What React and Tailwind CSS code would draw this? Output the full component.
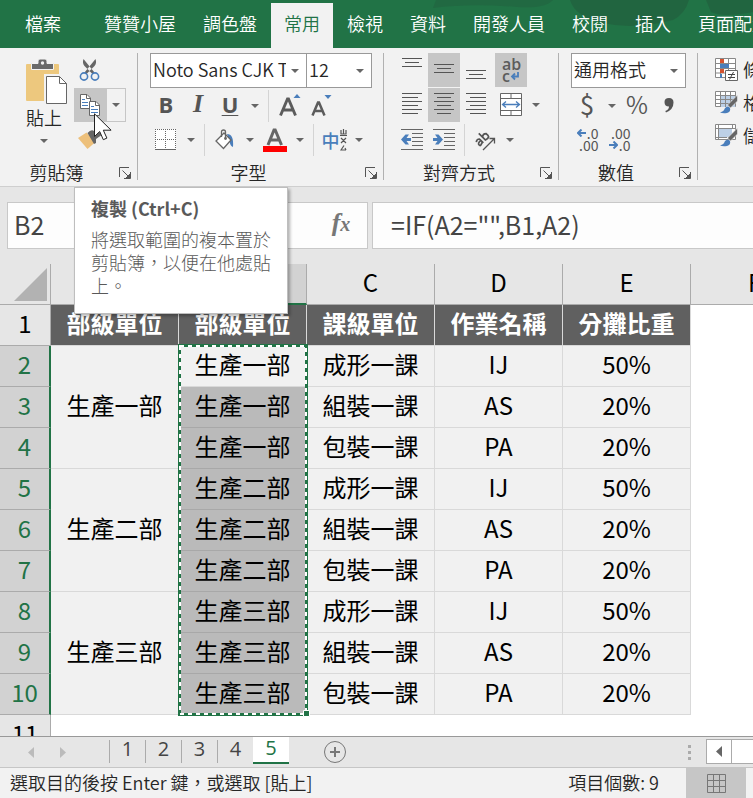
const TABS = [
  ['檔案', 'mr-4'],
  ['贊贊小屋', ''],
  ['調色盤', ''],
  ['常用', 'active'],
  ['檢視', ''],
  ['資料', ''],
  ['開發人員', ''],
  ['校閱', ''],
  ['插入', ''],
  ['頁面配置', ''],
];

const GROUPS = ['生產一部', '生產二部', '生產三部'];
const LESSONS = [
  ['成形一課', 'IJ', '50%'],
  ['組裝一課', 'AS', '20%'],
  ['包裝一課', 'PA', '20%'],
];

function Arrow() {
  return (
    <svg width="8" height="4" viewBox="0 0 8 4" className="shrink-0" aria-hidden="true">
      <path d="M0 0h8L4 4z" fill="#666" />
    </svg>
  );
}

function ArrowButton({ label }) {
  return (
    <button aria-label={label} className="flex h-full w-[18px] shrink-0 items-center justify-center">
      <Arrow />
    </button>
  );
}

function Tool({ label, on, children }) {
  return (
    <button
      aria-label={label}
      className={`flex h-full w-8 shrink-0 items-center justify-center ${on ? 'bg-[#c6c6c6]' : ''}`}
    >
      {children}
    </button>
  );
}

function Divider() {
  return <div className="mx-1 h-8 w-px shrink-0 bg-[#d4d4d4]" />;
}

function Row({ children }) {
  return <div className="flex h-[34px] items-center">{children}</div>;
}

function Group({ title, width, children }) {
  return (
    <section className={`flex shrink-0 ${width}`}>
      <div className="flex min-w-0 flex-1 flex-col">
        <div className="flex h-[104px] flex-col gap-px">{children}</div>
        <div className="mt-[3px] flex h-6 items-center">
          <span className="flex-1 text-center text-[18px] leading-6 text-[#262626]">{title}</span>
          <button aria-label={`${title}設定`} className="flex h-full w-6 items-center justify-center pt-[2px]">
            <svg width="12" height="12" viewBox="0 0 12 12" fill="none" stroke="#555" aria-hidden="true">
              <path d="M.5 10V.5H10M3.500 3.500l6 6M11.500 5v6.500H5" />
              <path d="M11 7v4H7z" fill="#555" />
            </svg>
          </button>
        </div>
      </div>
      <div className="h-[127px] w-px bg-[#b1b1b1]" />
    </section>
  );
}

function Combo({ label, value, width }) {
  return (
    <label className={`relative block h-[35px] border border-[#999] bg-white ${width}`}>
      <select
        aria-label={label}
        className="h-full w-full appearance-none bg-transparent pb-[2px] pl-[2px] pr-5 text-[18px] font-[350] text-[#262626] outline-none"
      >
        <option>{value}</option>
      </select>
      <span className="pointer-events-none absolute inset-y-0 right-[7px] flex items-center">
        <Arrow />
      </span>
    </label>
  );
}

function Lines({ rows }) {
  return (
    <svg width="22" height="34" viewBox="0 0 22 34" stroke="#555" aria-hidden="true">
      {rows.map(([y, x1, x2]) => (
        <path key={y} d={`M${x1} ${y + 0.5}H${x2}`} />
      ))}
    </svg>
  );
}

function PasteIcon() {
  return (
    <svg width="46" height="46" viewBox="0 0 46 46" aria-hidden="true">
      <rect x="5" y="5" width="33" height="37" rx="1" fill="#edc87e" />
      <path d="M10.500 10.500V4.500H17V2q0-2 2-2h5q2 0 2 2v2.500h6.500v6z" fill="#6a6a6a" stroke="#f2f2f2" />
      <circle cx="21.500" cy="4" r="1.700" fill="#f2f2f2" />
      <path d="M24.500 16.500H39l6.500 7v21h-21z" fill="#fff" stroke="#f2f2f2" strokeWidth="3" />
      <path d="M25.500 17.500H38.500l7 7v20h-20z" fill="#fff" stroke="#666" />
      <path d="M38.500 17.500v7h7" fill="none" stroke="#666" />
    </svg>
  );
}

function CutIcon() {
  return (
    <svg width="22" height="22" viewBox="0 0 22 22" aria-hidden="true">
      <path d="M4.500 0q-1.500 4 1 7l8 8 2-1.500zM16.500 0q1.500 4-1 7l-8 8-2-1.500z" fill="#666" />
      <circle cx="5" cy="17.500" r="3.600" fill="none" stroke="#4a7ebb" strokeWidth="1.600" />
      <circle cx="16" cy="17.500" r="3.600" fill="none" stroke="#4a7ebb" strokeWidth="1.600" />
    </svg>
  );
}

function CopyIcon() {
  return (
    <svg width="20" height="22" viewBox="0 0 20 22" aria-hidden="true">
      <path d="M.5.5H7l3.500 3.500v10.500H.5z" fill="#fff" stroke="#666" />
      <path d="M6.500.5v4h4" fill="none" stroke="#666" />
      <path d="M2 5.500h3M2 8.500h6M2 11.500h6" stroke="#4a7ebb" />
      <path d="M9.500 7.500H16l3.500 3.500v10.500h-10z" fill="#fff" stroke="#666" />
      <path d="M15.500 7.500v4h4" fill="none" stroke="#666" />
      <path d="M11 12.500h3M11 15.500h7M11 18.500h7" stroke="#4a7ebb" />
    </svg>
  );
}

function BrushIcon() {
  return (
    <svg width="24" height="20" viewBox="0 0 24 20" aria-hidden="true">
      <path d="M0 8l8.500-5.500 9 9.500-8 7z" fill="#edc07b" />
      <path d="M9.500 3q4-4.500 7-1.500l1.500 2.500 5-2.500v4L18 9v4l-2 1z" fill="#666" />
    </svg>
  );
}

function Pointer() {
  return (
    <svg
      className="pointer-events-none absolute left-[94px] top-[113px] z-20"
      width="19"
      height="28"
      viewBox="0 0 19 28"
      aria-hidden="true"
    >
      <path d="M.5.8v22.700l5.200-5 3.600 8.200 3.600-1.600-3.600-7.900h7.800z" fill="#fff" stroke="#222" />
    </svg>
  );
}

function SizeIcon({ up }) {
  return (
    <svg width="24" height="26" viewBox="0 0 24 26" aria-hidden="true">
      {up ? (
        <path d="M3.500 22.500L10.500 6h1L18.500 22.500M6.500 17h9" fill="none" stroke="#5c5c5c" strokeWidth="2.900" />
      ) : (
        <path d="M3.500 22.500L9 9.500h1L15.500 22.500M6 18h7" fill="none" stroke="#5c5c5c" strokeWidth="2.500" />
      )}
      <path d={up ? 'M16.500 5h7L20 1z' : 'M15.500 2h7L19 6z'} fill="#4a7ebb" />
    </svg>
  );
}

function BordersIcon() {
  return (
    <svg width="22" height="22" viewBox="0 0 22 22" aria-hidden="true">
      <rect width="21" height="21" fill="#fff" />
      <path d="M0 .5h21M0 10.500h21M.5 0v20M10.500 0v20M20.500 0v20" stroke="#666" strokeDasharray="1 1" />
      <path d="M0 20.500h21" stroke="#666" />
    </svg>
  );
}

function BucketIcon() {
  return (
    <svg width="20" height="22" viewBox="0 0 20 22" aria-hidden="true">
      <path d="M12 5q7 0 6 13-3-1-3.500-6z" fill="#4a7ebb" />
      <path d="M9 4l7 7-7.500 8.500L1 12z" fill="#fff" stroke="#666" strokeWidth="1.300" />
      <path d="M6.500 8V3q0-2 2-2t2 2v6" fill="none" stroke="#666" strokeWidth="1.300" />
      <circle cx="10.500" cy="9.500" r="1.400" fill="#666" />
    </svg>
  );
}

function FontColorIcon() {
  return (
    <svg width="24" height="24" viewBox="0 0 24 24" aria-hidden="true">
      <path d="M5 17L11 2h1.200L18.500 17M7.500 12h8.500" fill="none" stroke="#666" strokeWidth="3" />
      <path d="M0 18h24v6H0z" fill="#f00" />
    </svg>
  );
}

function PhoneticIcon() {
  return (
    <span className="flex items-center">
      <span className="text-[18px] font-medium leading-6 text-[#4a7ebb]">中</span>
      <svg width="7" height="22" viewBox="0 0 7 22" fill="none" stroke="#555" strokeWidth="1.200" aria-hidden="true">
        <path d="M1 1v4h5V1M3.500 0v5M0 6.500h7M1 9l5 5M6 9l-5 5M4 16.500l-3 4.500h5M5 19l1 2" />
      </svg>
    </span>
  );
}

function WrapIcon() {
  return (
    <span className='flex h-full w-[18px] flex-col items-start font-["Open_Sans",sans-serif] text-[16px] font-semibold leading-[12px] text-[#5c5c5c]'>
      <span className="pt-[5px]">ab</span>
      <span className="flex items-center">
        c
        <svg width="9" height="10" viewBox="0 0 9 10" fill="none" stroke="#4a7ebb" strokeWidth="1.800" aria-hidden="true">
          <path d="M8 1v4.500H2M5 2.500l-3 3 3 3" />
        </svg>
      </span>
    </span>
  );
}

function MergeIcon() {
  return (
    <svg width="24" height="24" viewBox="0 0 24 24" aria-hidden="true">
      <path d="M1.500.5h21v22h-21zM1.500 5.500h21M1.500 17.500h21M12 1v4M12 18v4" fill="#fff" stroke="#666" />
      <path d="M4 11.500h16M7 8.500l-3.500 3 3.500 3M17 8.500l3.500 3-3.500 3" fill="none" stroke="#4a7ebb" strokeWidth="1.300" />
    </svg>
  );
}

function IndentIcon({ right }) {
  return (
    <svg width="22" height="22" viewBox="0 0 22 22" aria-hidden="true">
      <path d="M0 .5h22M11 4.500h11M11 8.500h11M11 12.500h11M11 16.500h11M0 20.500h22" stroke="#666" />
      <path
        d={right ? 'M0 9h4.500L2 5.500h3.500l4.500 5-4.500 5H2L4.500 12H0z' : 'M10 9H5.500L8 5.500H4.500L0 10.500l4.500 5H8L5.500 12H10z'}
        fill="#4a7ebb"
      />
    </svg>
  );
}

function OrientIcon() {
  return (
    <svg width="22" height="22" viewBox="0 0 22 22" fill="none" stroke="#555" aria-hidden="true">
      <g transform="rotate(-45 9 10)" strokeWidth="1.700">
        <path d="M2 7.500q2.500-2 4.500 0V13M6.500 9.500Q2 9 2 11.500t4.500 0" />
        <path d="M10 3v10M10 8.500q2.500-2.500 5 0 .5 2.500-.5 4-2 1-4.500 0" />
      </g>
      <path d="M9 21L20 10M15.500 9.500h5v5" strokeWidth="1.300" />
    </svg>
  );
}

function BlueArrow({ right }) {
  return (
    <svg width="9" height="8" viewBox="0 0 9 8" fill="none" stroke="#4a7ebb" strokeWidth="2" aria-hidden="true">
      <path d={right ? 'M0 4h8M4.500.5L8 4 4.500 7.500' : 'M9 4H1M4.500.5L1 4l3.500 3.500'} />
    </svg>
  );
}

function DecimalIcon({ fewer }) {
  return (
    <span className="flex w-[23px] flex-col pb-[2px] text-right text-[14px] font-normal leading-3 text-[#555]">
      <span className="flex items-center justify-end gap-px">
        {!fewer && <BlueArrow />}
        {fewer ? '.00' : '.0'}
      </span>
      <span className="flex items-center justify-end gap-px">
        {fewer && <BlueArrow right />}
        {fewer ? '.0' : '.00'}
      </span>
    </span>
  );
}

function ConditionalIcon() {
  return (
    <svg width="23" height="23" viewBox="0 0 23 23" aria-hidden="true">
      <path d="M.5.500h20v19H.5zM5.500 0v20M.5 5.500h20M.5 10.500h20M.5 15h20M13.500 0v20" fill="#fff" stroke="#888" />
      <path d="M5 1h4v4H5zM5 11h4v4H5z" fill="#d35230" />
      <path d="M5 6h9v4H5zM5 16h2v4H5z" fill="#4a7ebb" />
      <path d="M10.500 12.500h12v10h-12z" fill="#fff" stroke="#666" />
      <path d="M13 16.500h7M13 19.500h7M18.500 14l-4 7.500" stroke="#444" />
    </svg>
  );
}

function TableBrushIcon({ cell }) {
  return (
    <svg width="23" height="23" viewBox="0 0 23 23" aria-hidden="true">
      <path d="M.5.500h20v15H.5z" fill="#fff" stroke="#888" />
      <path d={cell ? 'M4 4h13v9H4z' : 'M5 5h15v11H5z'} fill="#bdd0e6" />
      <path
        d={cell ? 'M.5 4.500h20M3.500 0v16M17.500 0v5M0 13.500h12' : 'M5.500 0v16M10.500 0v16M15.500 0v12M.5 4.500h20M.5 8.500h20M.5 12.500h14'}
        stroke="#888"
        fill="none"
      />
      <path d="M22.500 4v6l-7 7-3-3z" fill="#666" stroke="#f2f2f2" strokeWidth=".6" />
      <path d="M5 21.500q4-1 5-4.500 3-2.500 5 0 1 4-3 5-4 .8-7-.5z" fill="#4a7ebb" />
    </svg>
  );
}

function Ribbon() {
  return (
    <div className="flex h-[139px] shrink-0 overflow-hidden border-b border-[#cfcfcf] bg-[#f2f2f2] pt-[5px] font-[350]">
      <Group title="剪貼簿" width="w-[138px]">
        <div className="flex pl-4">
          <button className="flex w-[56px] flex-col items-center pt-[6px]">
            <PasteIcon />
            <span className="mb-[10px] text-[18px] leading-6 text-[#262626]">貼上</span>
            <Arrow />
          </button>
          <div className="ml-[2px] flex flex-col gap-px">
            <Row>
              <Tool label="剪下"><CutIcon /></Tool>
            </Row>
            <Row>
              <Tool label="複製" on><CopyIcon /></Tool>
              <div className="h-full border border-[#c6c6c6]"><ArrowButton label="複製選項" /></div>
            </Row>
            <Row>
              <Tool label="複製格式"><BrushIcon /></Tool>
            </Row>
          </div>
        </div>
      </Group>

      <Group title="字型" width="w-[246px]">
        <div className="flex h-[35px] pl-3">
          <Combo label="字型" value="Noto Sans CJK TC Regular" width="w-[157px]" />
          <Combo label="字型大小" value="12" width="-ml-px w-[66px]" />
        </div>
        <div className="pl-3">
          <Row>
            <Tool label="粗體"><b className='mb-1 font-["Open_Sans",sans-serif] text-[22px] leading-6 text-[#555]'>B</b></Tool>
            <Tool label="斜體"><b className='mb-1 font-["Liberation_Serif",serif] text-[26px] italic leading-6 text-[#555]'>I</b></Tool>
            <Tool label="底線">
              <span className='mb-1 font-["Open_Sans",sans-serif] text-[22px] font-bold leading-6 text-[#555] underline decoration-1 underline-offset-2'>U</span>
            </Tool>
            <ArrowButton label="底線選項" />
            <Divider />
            <Tool label="放大字型"><SizeIcon up /></Tool>
            <Tool label="縮小字型"><SizeIcon /></Tool>
          </Row>
          <Row>
            <Tool label="框線"><BordersIcon /></Tool>
            <ArrowButton label="框線選項" />
            <Divider />
            <Tool label="填滿色彩"><BucketIcon /></Tool>
            <ArrowButton label="填滿色彩選項" />
            <Tool label="字型色彩"><FontColorIcon /></Tool>
            <ArrowButton label="字型色彩選項" />
            <Divider />
            <Tool label="注音標示"><PhoneticIcon /></Tool>
            <ArrowButton label="注音標示選項" />
          </Row>
        </div>
      </Group>

      <Group title="對齊方式" width="w-[175px]">
        <div className="flex flex-col gap-px pl-3">
          <Row>
            <Tool label="靠上對齊"><Lines rows={[[5, 1, 21], [9, 4, 18], [13, 1, 21]]} /></Tool>
            <Tool label="置中對齊" on><Lines rows={[[11, 1, 21], [15, 4, 18], [19, 1, 21]]} /></Tool>
            <Tool label="靠下對齊"><Lines rows={[[17, 1, 21], [21, 4, 18], [25, 1, 21]]} /></Tool>
            <div className="ml-[3px] h-full"><Tool label="自動換行" on><WrapIcon /></Tool></div>
          </Row>
          <Row>
            <Tool label="靠左對齊"><Lines rows={[[5, 1, 21], [9, 1, 17], [13, 1, 21], [17, 1, 17], [21, 1, 21], [25, 1, 17]]} /></Tool>
            <Tool label="置中" on><Lines rows={[[5, 1, 21], [9, 4, 18], [13, 1, 21], [17, 4, 18], [21, 1, 21], [25, 4, 18]]} /></Tool>
            <Tool label="靠右對齊"><Lines rows={[[5, 1, 21], [9, 5, 21], [13, 1, 21], [17, 5, 21], [21, 1, 21], [25, 5, 21]]} /></Tool>
            <div className="ml-[3px] flex h-full">
              <Tool label="跨欄置中"><MergeIcon /></Tool>
              <ArrowButton label="跨欄置中選項" />
            </div>
          </Row>
          <Row>
            <Tool label="減少縮排"><IndentIcon /></Tool>
            <Tool label="增加縮排"><IndentIcon right /></Tool>
            <Divider />
            <Tool label="方向"><OrientIcon /></Tool>
            <ArrowButton label="方向選項" />
          </Row>
        </div>
      </Group>

      <Group title="數值" width="w-[139px]">
        <div className="flex h-[35px] pl-3">
          <Combo label="數值格式" value="通用格式" width="w-[115px]" />
        </div>
        <div className="pl-3">
          <Row>
            <Tool label="會計數字格式"><span className="mb-1 text-[26px] font-normal leading-8 text-[#555]">$</span></Tool>
            <ArrowButton label="會計選項" />
            <Tool label="百分比"><span className="mb-1 text-[24px] leading-8 text-[#555]">%</span></Tool>
            <Tool label="千分位">
              <svg width="10" height="16" viewBox="0 0 10 16" aria-hidden="true">
                <path d="M.5 4q0-4 4.500-4t4.500 4.500q0 7-7.500 10l-.7-1.500Q5 11.500 5 8.500.5 8.500.5 4z" fill="#555" />
              </svg>
            </Tool>
          </Row>
          <Row>
            <Tool label="增加小數位數"><DecimalIcon /></Tool>
            <Tool label="減少小數位數"><DecimalIcon fewer /></Tool>
          </Row>
        </div>
      </Group>

      <div className="flex flex-col gap-px whitespace-nowrap pl-[17px] text-[18px] text-[#262626]">
        <button className="flex h-8 items-center gap-[5px]"><ConditionalIcon />條件式格式設定</button>
        <button className="flex h-8 items-center gap-[5px]"><TableBrushIcon />格式化為表格</button>
        <button className="flex h-8 items-center gap-[5px]"><TableBrushIcon cell />儲存格樣式</button>
      </div>
    </div>
  );
}

function CopyTooltip() {
  return (
    <div
      role="tooltip"
      className="absolute left-[74px] top-[187px] z-10 h-[127px] w-[214px] border border-[#bebebe] bg-white px-4 py-2 text-[#595959] shadow-[2px_2px_3px_rgba(0,0,0,0.3)]"
    >
      <p className="mb-2 text-[18px] font-bold leading-6">複製 (Ctrl+C)</p>
      <p className="w-[180px] text-[18px] font-light leading-[23px]">將選取範圍的複本置於剪貼簿，以便在他處貼上。</p>
    </div>
  );
}

function FormulaBar() {
  return (
    <div className="flex h-[77px] shrink-0 bg-[#e6e6e6] pl-[7px] pt-[15px]">
      <input
        aria-label="名稱方塊"
        defaultValue="B2"
        className="h-[47px] w-[150px] shrink-0 border border-[#c8c8c8] bg-[#fdfdfd] px-[6px] pb-1 text-[25px] text-[#444] outline-none"
      />
      <div className="ml-[5px] flex h-[47px] w-[206px] shrink-0 items-center justify-end border border-[#c8c8c8] bg-[#fdfdfd]">
        <button aria-label="輸入" className="flex w-8 justify-center">
          <svg width="20" height="16" viewBox="0 0 20 16" fill="none" stroke="#b8b8b8" strokeWidth="3" aria-hidden="true">
            <path d="M2 8l6 6L18 1" />
          </svg>
        </button>
        <button aria-label="插入函數" className='ml-5 w-[52px] pb-1 text-center font-["Liberation_Serif",serif] text-[26px] font-bold italic leading-8 text-[#777]'>
          f<span className="text-[20px]">x</span>
        </button>
      </div>
      <input
        aria-label="資料編輯列"
        defaultValue={'=IF(A2="",B1,A2)'}
        className="ml-1 h-[47px] min-w-0 flex-1 border border-r-0 border-[#c8c8c8] bg-[#fdfdfd] px-[18px] pb-1 text-[25px] text-[#444] outline-none"
      />
    </div>
  );
}

const HEAD = 'border-r border-b border-[#ababab] bg-[#e6e6e6] p-0 pb-1 text-center font-normal text-black';
const CELL = 'border-r border-b border-[#d9d9d9] bg-[#f1f1f1] p-0 pb-1 text-center';
const TITLE = 'border-r border-b border-[#d9d9d9] bg-[#606060] p-0 pb-1 text-center font-bold text-white';

function RowHead({ n, selected }) {
  return (
    <th
      scope="row"
      className={
        selected
          ? 'border-r-2 border-b border-r-[#217346] border-b-[#ababab] bg-[#d2d2d2] p-0 pb-1 text-center font-normal text-[#217346]'
          : HEAD
      }
    >
      {n}
    </th>
  );
}

function Sheet() {
  return (
    <main className="relative min-h-0 flex-1 overflow-hidden bg-white">
      <table className="w-[819px] table-fixed border-separate border-spacing-0 text-[24px] leading-[36px] text-black">
        <colgroup>
          <col className="w-[51px]" />
          <col className="w-[128px]" />
          <col className="w-[128px]" />
          <col className="w-[128px]" />
          <col className="w-[128px]" />
          <col className="w-[128px]" />
          <col className="w-[128px]" />
        </colgroup>
        <thead>
          <tr className="h-[41px]">
            <th className="border-b border-r border-[#ababab] bg-[#e6e6e6] p-0" aria-label="全選">
              <svg className="ml-[14px]" width="34" height="33" viewBox="0 0 34 33" aria-hidden="true">
                <path d="M33 0v33H0z" fill="#b2b2b2" />
              </svg>
            </th>
            <th className={HEAD}>A</th>
            <th className="border-b-2 border-r border-b-[#217346] border-r-[#ababab] bg-[#d2d2d2] p-0 pb-[3px] font-normal text-[#217346]">B</th>
            <th className={HEAD}>C</th>
            <th className={HEAD}>D</th>
            <th className={HEAD}>E</th>
            <th className={HEAD}>F</th>
          </tr>
        </thead>
        <tbody>
          <tr className="h-[41px]">
            <RowHead n={1} />
            <td className={TITLE}>部級單位</td>
            <td className={TITLE}>部級單位</td>
            <td className={TITLE}>課級單位</td>
            <td className={TITLE}>作業名稱</td>
            <td className={TITLE}>分攤比重</td>
            <td />
          </tr>
          {GROUPS.map((dept, g) =>
            LESSONS.map(([lesson, job, share], i) => (
              <tr key={dept + lesson} className="h-[41px]">
                <RowHead n={g * 3 + i + 2} selected />
                {i === 0 && <td rowSpan={3} className={CELL}>{dept}</td>}
                <td
                  className={
                    g + i === 0 ? CELL : 'border-r border-b border-[#a8a8a8] bg-[#bababa] p-0 pb-1 text-center'
                  }
                >
                  {dept}
                </td>
                <td className={CELL}>{lesson}</td>
                <td className={CELL}>{job}</td>
                <td className={CELL}>{share}</td>
                <td />
              </tr>
            )),
          )}
          <tr className="h-[41px]">
            <RowHead n={11} />
            <td colSpan={6} />
          </tr>
        </tbody>
      </table>
      <svg
        className="pointer-events-none absolute left-[177px] top-[80px]"
        width="134"
        height="374"
        viewBox="0 0 134 374"
        fill="none"
        aria-hidden="true"
      >
        <rect x="2.500" y="1.500" width="127" height="369" stroke="#217346" strokeWidth="3" />
        <rect x="3" y="2" width="126" height="368" stroke="#fff" strokeWidth="2" strokeDasharray="4 4" />
        <path d="M126.500 366.500h6v6h-6z" fill="#217346" stroke="#fff" strokeWidth="1" />
      </svg>
    </main>
  );
}

function SheetTabs() {
  return (
    <nav className='flex h-[31px] shrink-0 items-start border-t border-[#999] bg-[#e6e6e6] font-["Open_Sans",sans-serif]'>
      <div className="flex h-full w-[109px] shrink-0 items-center gap-[26px] pl-7">
        <button aria-label="上一張工作表">
          <svg width="6" height="11" viewBox="0 0 6 11" aria-hidden="true"><path d="M6 0v11L0 5.500z" fill="#bbb" /></svg>
        </button>
        <button aria-label="下一張工作表">
          <svg width="6" height="11" viewBox="0 0 6 11" aria-hidden="true"><path d="M0 0v11l6-5.500z" fill="#bbb" /></svg>
        </button>
      </div>
      {['1', '2', '3', '4'].map((n) => (
        <button key={n} className="mt-[3px] flex h-[23px] w-9 items-center justify-center border-l border-[#ababab] pb-[6px] text-[20px] leading-6 text-[#444]">
          {n}
        </button>
      ))}
      <button className="flex h-[27px] w-9 items-center justify-center border-b-2 border-[#217346] bg-white pb-1 text-[20px] leading-6 text-[#217346]">
        5
      </button>
      <button aria-label="新增工作表" className="ml-[34px] mt-[3px]">
        <svg width="24" height="24" viewBox="0 0 24 24" fill="none" stroke="#777" aria-hidden="true">
          <circle cx="12" cy="12" r="10.500" />
          <path d="M12 7v10M7 12h10" strokeWidth="2" />
        </svg>
      </button>
      <div className="ml-auto mr-[15px] flex h-full flex-col justify-center gap-[3px]">
        <i className="size-[3px] bg-[#ababab]" />
        <i className="size-[3px] bg-[#ababab]" />
        <i className="size-[3px] bg-[#ababab]" />
      </div>
      <button aria-label="向左捲動" className="mt-[2px] flex h-[25px] w-[26px] items-center justify-center border border-[#ababab] bg-white">
        <svg width="6" height="11" viewBox="0 0 6 11" aria-hidden="true"><path d="M6 0v11L0 5.500z" fill="#666" /></svg>
      </button>
      <div className="mt-[2px] h-[25px] w-[21px] border-y border-[#ababab] bg-white" />
    </nav>
  );
}

function StatusBar() {
  return (
    <footer className="flex h-[31px] shrink-0 items-center border-t border-[#c6c6c6] bg-[#f2f2f2] pl-[10px] pr-[7px] text-[18px] font-[350] leading-6 text-[#262626]">
      <span className="pb-[2px]">選取目的後按 Enter 鍵，或選取 [貼上]</span>
      <span className="ml-auto mr-[27px] pb-[2px]">項目個數: 9</span>
      <button aria-label="標準模式" className="flex h-full w-[60px] items-center justify-center bg-[#c6c6c6]">
        <svg width="19" height="19" viewBox="0 0 19 19" fill="none" stroke="#777" aria-hidden="true">
          <path d="M.5.500h18v18H.5zM6.500 0v19M12.500 0v19M0 6.500h19M0 12.500h19" />
        </svg>
      </button>
    </footer>
  );
}

function HeaderPattern() {
  return (
    <svg className="absolute right-0 top-0" width="323" height="48" viewBox="0 0 323 48" fill="#22623f" aria-hidden="true">
      <path d="M6 0h117q-8 9-36 7Q40 3 3 8z" opacity=".6" />
      <path d="M140 0h119q-4 14-16 20-40 10-70 3-28-6-33-23z" opacity=".8" />
      <path d="M276 0h47v12q-30 6-42 0z" opacity=".8" />
    </svg>
  );
}

export default function App() {
  return (
    <div className='relative flex h-screen flex-col overflow-hidden bg-[#e6e6e6] font-["Noto_Sans_CJK_TC",sans-serif]'>
      <header className="relative h-12 shrink-0 overflow-hidden bg-[#217346]">
        <HeaderPattern />
        <nav className="relative flex h-full items-end gap-px whitespace-nowrap pl-3 text-[18px] font-[350]">
          {TABS.map(([name, mode]) => (
            <button
              key={name}
              className={
                mode === 'active'
                  ? 'h-[45px] shrink-0 bg-[#f2f2f2] px-[13px] pb-[5px] text-[#217346]'
                  : `h-[45px] shrink-0 px-[13px] pb-[5px] text-white ${mode}`
              }
            >
              {name}
            </button>
          ))}
        </nav>
      </header>
      <Ribbon />
      <FormulaBar />
      <Sheet />
      <SheetTabs />
      <StatusBar />
      <CopyTooltip />
      <Pointer />
    </div>
  );
}
